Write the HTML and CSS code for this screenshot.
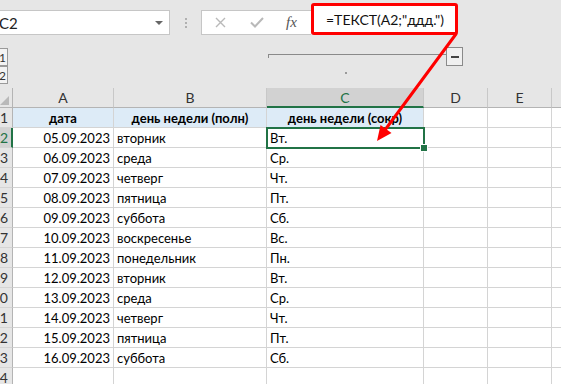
FILE: index.html
```html
<!DOCTYPE html>
<html>
<head>
  <title>ТЕКСТ ддд</title>
  <link rel="stylesheet" href="styles.css">
</head>
<body>
  <div class="topbar">
    <div class="namebox">
      <span>C2</span>
      <span class="dd"></span>
    </div>
    <div class="sep"><i></i><i></i><i></i></div>
    <div class="fbox">
      <svg class="ic-x" width="11" height="11" viewBox="0 0 11 11"><path d="M1 1L10 10M10 1L1 10" stroke="#b9b9b9" stroke-width="1.4" fill="none"/></svg>
      <svg class="ic-ok" width="14" height="11" viewBox="0 0 14 11"><path d="M1 5.5L5 9.5L13 1" stroke="#b9b9b9" stroke-width="2" fill="none"/></svg>
      <span class="fx">fx</span>
    </div>
    <div class="formula">=ТЕКСТ(A2;"ддд.")</div>
  </div>

  <div class="outline">
    <div class="levels">
      <div class="lvl">1</div>
      <div class="lvl">2</div>
    </div>
    <div class="group">
      <div class="bracket"></div>
      <div class="dot"></div>
    </div>
    <div class="collapse"><span></span></div>
  </div>

  <div class="sheet">
    <div class="hd corner"></div>
    <div class="hd">A</div>
    <div class="hd">B</div>
    <div class="hd sel">C</div>
    <div class="hd">D</div>
    <div class="hd">E</div>
    <div class="hd"></div>

    <div class="rh">1</div>
    <div class="c title">дата</div>
    <div class="c title">день недели (полн)</div>
    <div class="c title">день недели (сокр)</div>
    <div class="c"></div><div class="c"></div><div class="c"></div>

    <div class="rh sel">2</div>
    <div class="c num">05.09.2023</div><div class="c">вторник</div><div class="c active">Вт.</div>
    <div class="c"></div><div class="c"></div><div class="c"></div>

    <div class="rh">3</div>
    <div class="c num">06.09.2023</div><div class="c">среда</div><div class="c">Ср.</div>
    <div class="c"></div><div class="c"></div><div class="c"></div>

    <div class="rh">4</div>
    <div class="c num">07.09.2023</div><div class="c">четверг</div><div class="c">Чт.</div>
    <div class="c"></div><div class="c"></div><div class="c"></div>

    <div class="rh">5</div>
    <div class="c num">08.09.2023</div><div class="c">пятница</div><div class="c">Пт.</div>
    <div class="c"></div><div class="c"></div><div class="c"></div>

    <div class="rh">6</div>
    <div class="c num">09.09.2023</div><div class="c">суббота</div><div class="c">Сб.</div>
    <div class="c"></div><div class="c"></div><div class="c"></div>

    <div class="rh">7</div>
    <div class="c num">10.09.2023</div><div class="c">воскресенье</div><div class="c">Вс.</div>
    <div class="c"></div><div class="c"></div><div class="c"></div>

    <div class="rh">8</div>
    <div class="c num">11.09.2023</div><div class="c">понедельник</div><div class="c">Пн.</div>
    <div class="c"></div><div class="c"></div><div class="c"></div>

    <div class="rh">9</div>
    <div class="c num">12.09.2023</div><div class="c">вторник</div><div class="c">Вт.</div>
    <div class="c"></div><div class="c"></div><div class="c"></div>

    <div class="rh">10</div>
    <div class="c num">13.09.2023</div><div class="c">среда</div><div class="c">Ср.</div>
    <div class="c"></div><div class="c"></div><div class="c"></div>

    <div class="rh">11</div>
    <div class="c num">14.09.2023</div><div class="c">четверг</div><div class="c">Чт.</div>
    <div class="c"></div><div class="c"></div><div class="c"></div>

    <div class="rh">12</div>
    <div class="c num">15.09.2023</div><div class="c">пятница</div><div class="c">Пт.</div>
    <div class="c"></div><div class="c"></div><div class="c"></div>

    <div class="rh">13</div>
    <div class="c num">16.09.2023</div><div class="c">суббота</div><div class="c">Сб.</div>
    <div class="c"></div><div class="c"></div><div class="c"></div>

    <div class="rh">14</div>
    <div class="c"></div><div class="c"></div><div class="c"></div>
    <div class="c"></div><div class="c"></div><div class="c"></div>
  </div>

  <!-- red annotation arrow -->
  <svg class="arrow" width="561" height="384" viewBox="0 0 561 384">
    <line x1="456" y1="34" x2="385" y2="130" stroke="#ff0000" stroke-width="3" stroke-linecap="round"/>
    <polygon points="377,141 391.5,133 380.5,125" fill="#ff0000"/>
  </svg>
</body>
</html>
```

FILE: styles.css
```css
body {
  margin: 0;
  width: 561px;
  height: 384px;
  overflow: hidden;
  background-color: #e6e6e6;
  font-family: Lato, "Open Sans", sans-serif;
  color: #000;
  position: relative;
}

/* formula bar */
.topbar {
  height: 37px;
  display: flex;
  align-items: flex-end;
  padding-bottom: 2px;
  box-sizing: border-box;
}

.namebox {
  width: 173px;
  height: 25px;
  margin-left: -3px;
  box-sizing: border-box;
  border: 1px solid #c6c6c6;
  background-color: #fff;
  display: flex;
  align-items: center;
  justify-content: space-between;
  padding: 0 6px 0 1px;
  font-size: 15px;
  color: #222;
}

.namebox .dd {
  width: 0;
  height: 0;
  border-left: 4px solid transparent;
  border-right: 4px solid transparent;
  border-top: 4px solid #666;
}

.sep {
  width: 31px;
  height: 25px;
  display: flex;
  flex-direction: column;
  align-items: center;
  justify-content: center;
  gap: 2px;
}

.sep i {
  width: 2px;
  height: 2px;
  background-color: #b0b0b0;
}

.fbox {
  width: 110px;
  height: 25px;
  box-sizing: border-box;
  border: 1px solid #c6c6c6;
  border-right: none;
  background-color: #fff;
  display: flex;
  align-items: center;
}

.fbox .ic-x {
  margin-left: 13px;
}

.fbox .ic-ok {
  margin-left: 24px;
}

.fbox .fx {
  margin-left: 22px;
  font-family: "Liberation Serif", serif;
  font-style: italic;
  font-size: 15px;
  color: #555;
}

.formula {
  width: 147px;
  height: 32px;
  box-sizing: border-box;
  border: 3px solid #ff0000;
  border-radius: 3px;
  background-color: #fff;
  padding-left: 12px;
  display: flex;
  align-items: center;
  font-size: 14px;
  color: #111;
}

/* outline / grouping strip */
.outline {
  height: 51px;
  display: flex;
  align-items: flex-start;
}

.levels {
  margin-left: -3px;
  padding-top: 11px;
}

.lvl {
  width: 11px;
  height: 18px;
  box-sizing: border-box;
  border: 1px solid #9a9a9a;
  background-color: #f3f3f3;
  font-size: 12px;
  color: #333;
  display: flex;
  align-items: center;
  justify-content: flex-end;
  overflow: hidden;
  padding-right: 1px;
}

.group {
  margin-left: 260px;
  margin-top: 17px;
}

.bracket {
  width: 178px;
  height: 4px;
  box-sizing: border-box;
  border-top: 1px solid #8a8a8a;
  border-left: 1px solid #8a8a8a;
}

.dot {
  width: 2px;
  height: 2px;
  background-color: #9a9a9a;
  margin: 14px 0 0 77px;
}

.collapse {
  width: 17px;
  height: 19px;
  margin-top: 10px;
  box-sizing: border-box;
  border: 1px solid #8a8a8a;
  background-color: #f0f0f0;
  display: flex;
  align-items: center;
  justify-content: center;
}

.collapse span {
  width: 8px;
  height: 2px;
  background-color: #444;
}

/* sheet grid */
.sheet {
  display: grid;
  grid-template-columns: 13px 101px 153px 157px 64px 64px 64px;
  grid-auto-rows: 20px;
  background-color: #fff;
}

.hd {
  background-color: #e6e6e6;
  border-right: 1px solid #c8c8c8;
  border-bottom: 1px solid #b4b4b4;
  box-sizing: border-box;
  display: flex;
  align-items: center;
  justify-content: center;
  font-size: 14px;
  color: #333;
}

.hd.sel {
  background-color: #d2d2d2;
  border-bottom: 2px solid #217346;
  color: #217346;
}

.corner {
  position: relative;
  border-right: 1px solid #b4b4b4;
}

.corner::after {
  content: "";
  position: absolute;
  right: 3px;
  bottom: 2px;
  width: 0;
  height: 0;
  border-left: 9px solid transparent;
  border-bottom: 9px solid #b9b9b9;
}

.rh {
  background-color: #e6e6e6;
  border-right: 1px solid #b4b4b4;
  border-bottom: 1px solid #d4d4d4;
  box-sizing: border-box;
  display: flex;
  align-items: center;
  justify-content: flex-end;
  overflow: hidden;
  padding-right: 4px;
  font-size: 14px;
  color: #333;
}

.rh.sel {
  background-color: #d2d2d2;
  border-right: 2px solid #217346;
  color: #217346;
  padding-right: 3px;
}

.c {
  border-right: 1px solid #d4d4d4;
  border-bottom: 1px solid #d4d4d4;
  box-sizing: border-box;
  display: flex;
  align-items: center;
  padding: 0 3px;
  overflow: hidden;
  white-space: nowrap;
  font-size: 13px;
}

.c.num {
  justify-content: flex-end;
}

.c.title {
  background-color: #ddebf7;
  justify-content: center;
  font-weight: bold;
}

.c.active {
  position: relative;
  overflow: visible;
}

.c.active::after {
  content: "";
  position: absolute;
  top: -1px;
  left: -1px;
  right: -2px;
  bottom: -2px;
  border: 2px solid #217346;
}

.c.active::before {
  content: "";
  position: absolute;
  right: -5px;
  bottom: -5px;
  width: 6px;
  height: 6px;
  background-color: #217346;
  border: 1px solid #fff;
  z-index: 2;
}

/* annotation overlay */
.arrow {
  position: absolute;
  top: 0;
  left: 0;
  pointer-events: none;
  z-index: 10;
}
```
